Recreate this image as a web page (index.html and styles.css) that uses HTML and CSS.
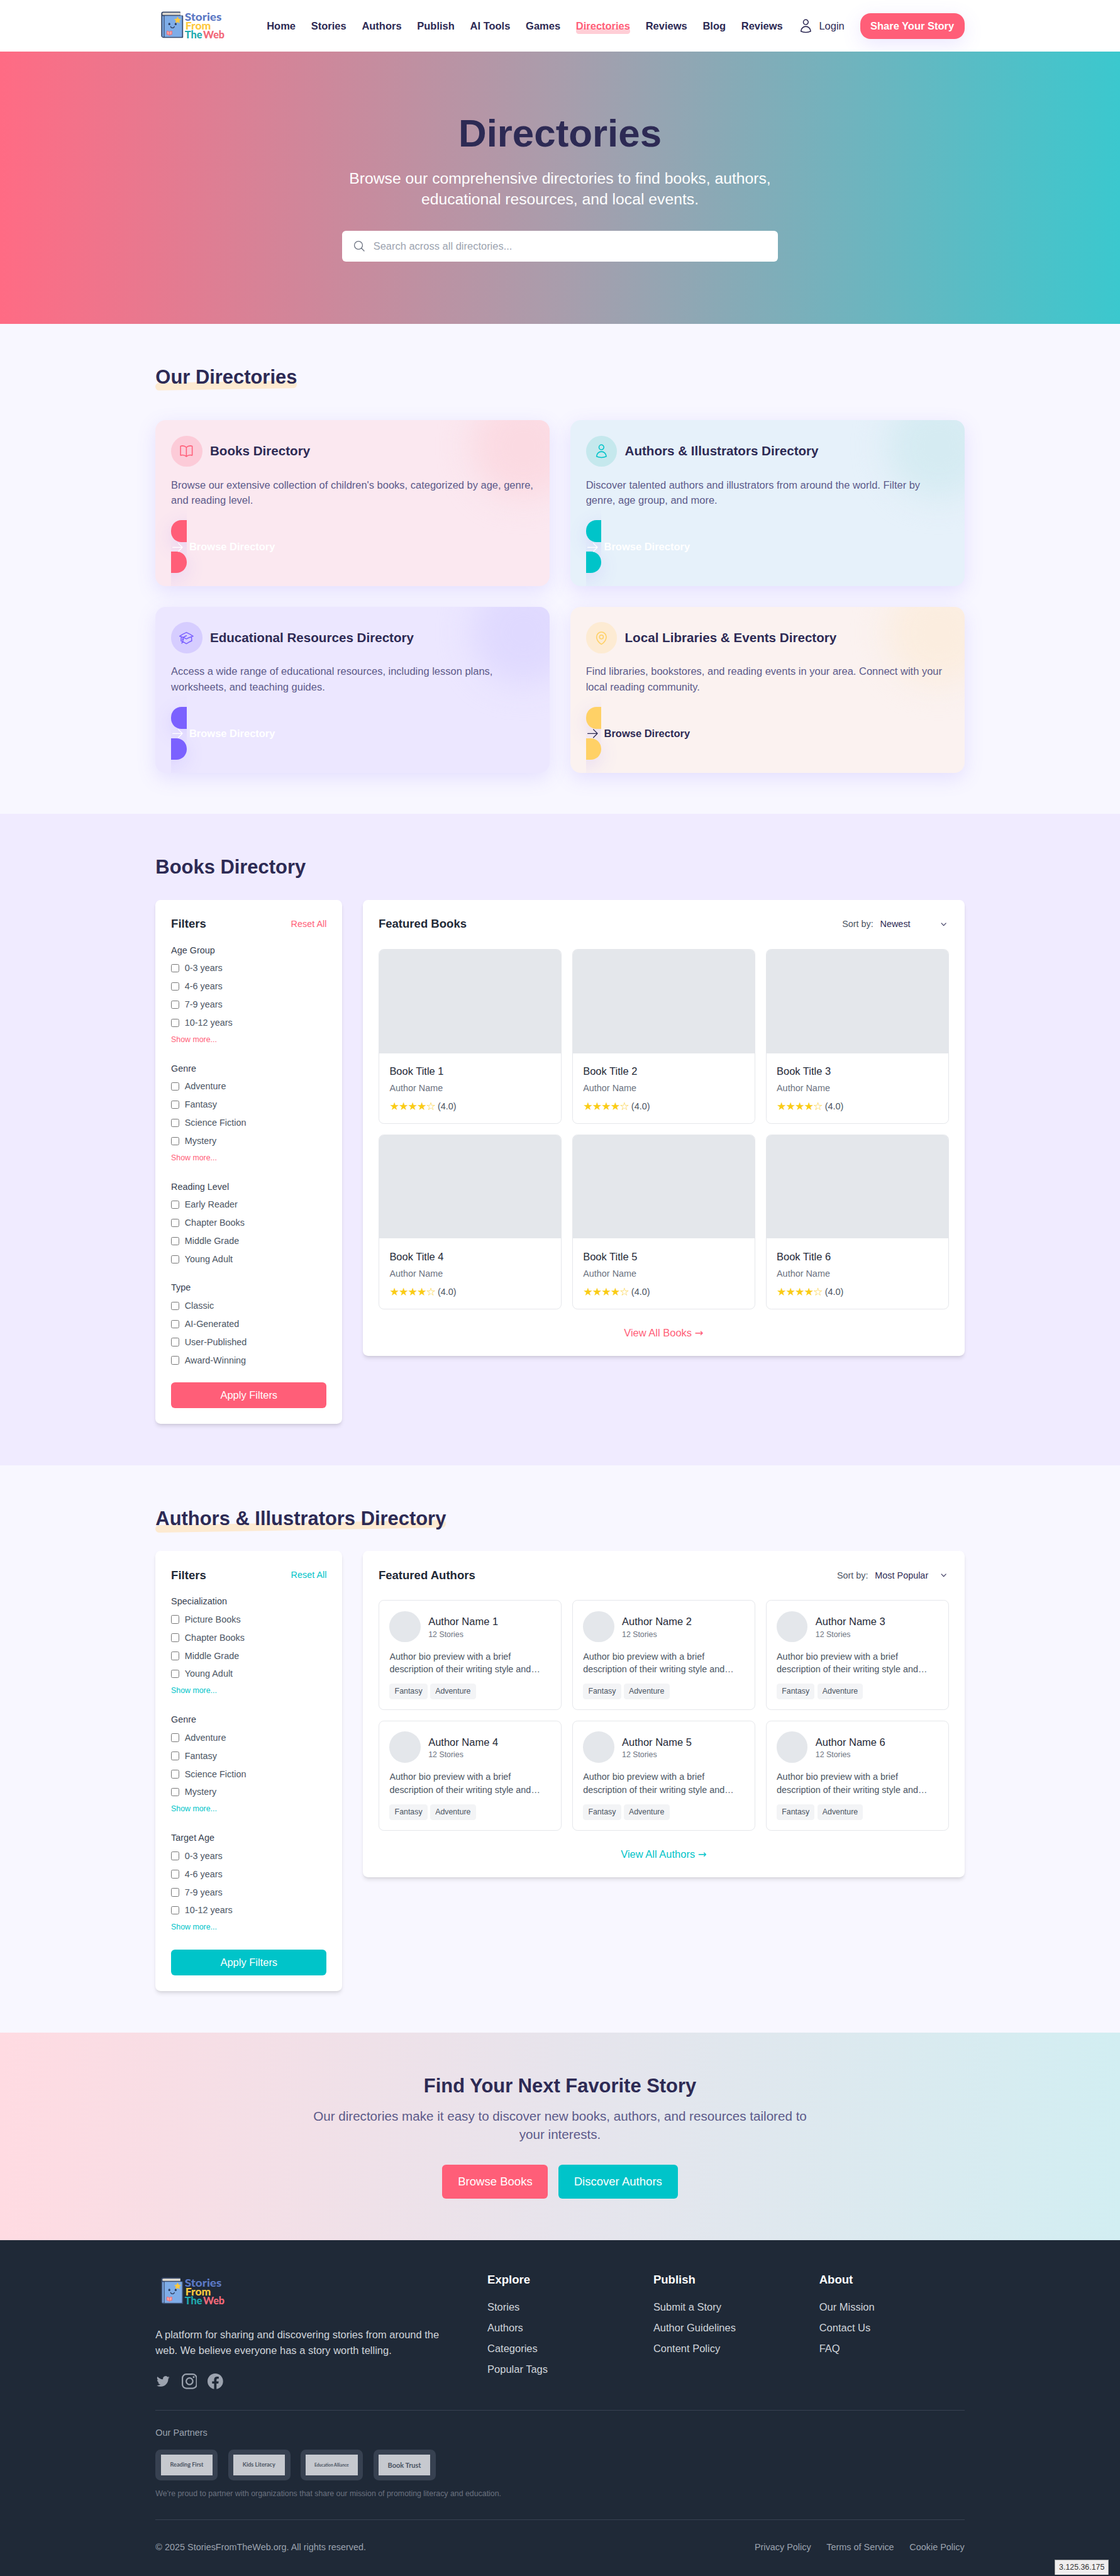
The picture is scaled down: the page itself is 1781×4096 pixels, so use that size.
FILE: index.html
```html
<!DOCTYPE html>
<html lang="en">
<head>
<meta charset="utf-8">
<title>Directories - Stories From The Web</title>
<link rel="stylesheet" href="styles.css">
</head>
<body>
<svg class="sprite" aria-hidden="true">
  <symbol id="logo" viewBox="0 0 112 64">
    <path d="M12.2 11h25.6v6H42v32.7H12.5a2.5 2.5 0 0 1-2.6-2.6V13.6A2.5 2.5 0 0 1 12.2 11z" fill="#3b4c6e" stroke="#3b4c6e" stroke-width="1.8" stroke-linejoin="round"/>
    <path d="M12.6 11.8h26v3.6h-26a1.8 1.8 0 0 1 0-3.6z" fill="#e3ddd1"/>
    <rect x="10.8" y="17" width="2.2" height="32" fill="#7fade8"/>
    <rect x="14.2" y="16.8" width="27" height="32.4" rx=".6" fill="#7fade8"/>
    <path d="m34.4 18.8 1.3 2.8 3.1.4-2.2 2.2.5 3.1-2.7-1.5-2.8 1.5.6-3.1-2.2-2.2 3-.4z" fill="#fdc93f" stroke="#fdc93f" stroke-width="1" stroke-linejoin="round"/>
    <ellipse cx="21.6" cy="29.3" rx="1.5" ry="1.8" fill="#2f4163"/>
    <ellipse cx="31.4" cy="29.3" rx="1.5" ry="1.8" fill="#2f4163"/>
    <path d="M23.6 33c.6 3 5.2 3 5.8 0" fill="none" stroke="#2f4163" stroke-width="1.2" stroke-linecap="round"/>
    <path d="M17.8 40.3q2.3-.5 3.9 1.3 1.6-1.8 3.9-1.3v5q-2.3-.2-3.9 1.5-1.6-1.7-3.9-1.5z" fill="#f7a6a2" stroke="#ee6674" stroke-width=".9" stroke-linejoin="round"/>
    <path d="M21.7 41.6v5" stroke="#ee6674" stroke-width=".9"/>
    <g class="logo-text">
      <text x="45.3" y="24" font-size="16.5" textLength="57" lengthAdjust="spacingAndGlyphs" fill="#5b78c4">Stories</text>
      <text x="46.3" y="37.7" font-size="15.6" textLength="39.5" lengthAdjust="spacingAndGlyphs" fill="#fdc93f">From</text>
      <text x="45.3" y="51.5" font-size="15.6" textLength="27" lengthAdjust="spacingAndGlyphs" fill="#1fabb0">The</text>
      <text x="73.8" y="51.5" font-size="15.6" textLength="33" lengthAdjust="spacingAndGlyphs" fill="#f26878">Web</text>
    </g>
  </symbol>
  <symbol id="user" viewBox="0 0 24 24"><path d="M15.75 6a3.75 3.75 0 11-7.5 0 3.75 3.75 0 017.5 0zM4.501 20.118a7.5 7.5 0 0114.998 0A17.933 17.933 0 0112 21.75c-2.676 0-5.216-.584-7.499-1.632z"/></symbol>
  <symbol id="search" viewBox="0 0 24 24"><path d="M21 21l-5.197-5.197m0 0A7.5 7.5 0 105.196 5.196a7.5 7.5 0 0010.607 10.607z"/></symbol>
  <symbol id="book" viewBox="0 0 24 24"><path d="M12 6.042A8.967 8.967 0 006 3.75c-1.052 0-2.062.18-3 .512v14.25A8.987 8.987 0 016 18c2.305 0 4.408.867 6 2.292m0-14.25a8.966 8.966 0 016-2.292c1.052 0 2.062.18 3 .512v14.25A8.987 8.987 0 0018 18a8.967 8.967 0 00-6 2.292m0-14.25v14.25"/></symbol>
  <symbol id="cap" viewBox="0 0 24 24"><path d="M4.26 10.147a60.436 60.436 0 00-.491 6.347A48.627 48.627 0 0112 20.904a48.627 48.627 0 018.232-4.41 60.46 60.46 0 00-.491-6.347m-15.482 0a50.57 50.57 0 00-2.658-.813A59.905 59.905 0 0112 3.493a59.902 59.902 0 0110.399 5.84c-.896.248-1.783.52-2.658.814m-15.482 0A50.697 50.697 0 0112 13.489a50.702 50.702 0 017.74-3.342M6.75 15a.75.75 0 100-1.5.75.75 0 000 1.5zm0 0v-3.675A55.378 55.378 0 0112 8.443m-7.007 11.55A5.981 5.981 0 006.75 15.75v-1.5"/></symbol>
  <symbol id="pin" viewBox="0 0 24 24"><path d="M15 10.5a3 3 0 11-6 0 3 3 0 016 0z"/><path d="M19.5 10.5c0 7.142-7.5 11.25-7.5 11.25S4.5 17.642 4.5 10.5a7.5 7.5 0 1115 0z"/></symbol>
  <symbol id="arrow" viewBox="0 0 24 24"><path d="M13.5 4.5L21 12m0 0l-7.5 7.5M21 12H3"/></symbol>
  <symbol id="chevron" viewBox="0 0 10 6"><path d="M.8.7 5 5 9.2.7"/></symbol>
</svg>

<header class="header">
  <div class="container header-row">
    <svg class="logo"><use href="#logo"/></svg>
    <nav class="nav">
      <a>Home</a><a>Stories</a><a>Authors</a><a>Publish</a><a>AI Tools</a><a>Games</a><a class="active">Directories</a><a>Reviews</a><a>Blog</a><a>Reviews</a>
      <a class="login"><svg class="icon"><use href="#user"/></svg>Login</a>
      <a class="share">Share Your Story</a>
    </nav>
  </div>
</header>

<section class="hero">
  <h1>Directories</h1>
  <p>Browse our comprehensive directories to find books, authors, educational resources, and local events.</p>
  <div class="search"><svg class="icon"><use href="#search"/></svg><span>Search across all directories...</span></div>
</section>

<section class="section">
  <div class="container">
    <h2 class="title underlined overview-title">Our Directories</h2>
    <div class="directories">
      <article class="dir pink">
        <div class="dir-head"><span class="dir-icon"><svg class="icon"><use href="#book"/></svg></span><h3>Books Directory</h3></div>
        <p>Browse our extensive collection of children's books, categorized by age, genre, and reading level.</p>
        <a class="browse"><span class="browse-label"><svg class="icon"><use href="#arrow"/></svg>Browse Directory</span></a>
      </article>
      <article class="dir teal">
        <div class="dir-head"><span class="dir-icon"><svg class="icon"><use href="#user"/></svg></span><h3>Authors &amp; Illustrators Directory</h3></div>
        <p>Discover talented authors and illustrators from around the world. Filter by genre, age group, and more.</p>
        <a class="browse"><span class="browse-label"><svg class="icon"><use href="#arrow"/></svg>Browse Directory</span></a>
      </article>
      <article class="dir purple">
        <div class="dir-head"><span class="dir-icon"><svg class="icon"><use href="#cap"/></svg></span><h3>Educational Resources Directory</h3></div>
        <p>Access a wide range of educational resources, including lesson plans, worksheets, and teaching guides.</p>
        <a class="browse"><span class="browse-label"><svg class="icon"><use href="#arrow"/></svg>Browse Directory</span></a>
      </article>
      <article class="dir yellow">
        <div class="dir-head"><span class="dir-icon"><svg class="icon"><use href="#pin"/></svg></span><h3>Local Libraries &amp; Events Directory</h3></div>
        <p>Find libraries, bookstores, and reading events in your area. Connect with your local reading community.</p>
        <a class="browse"><span class="browse-label"><svg class="icon"><use href="#arrow"/></svg>Browse Directory</span></a>
      </article>
    </div>
  </div>
</section>

<section class="section lavender theme-pink">
  <div class="container">
    <h2 class="title">Books Directory</h2>
    <div class="columns">
      <aside class="panel">
        <div class="panel-head"><h3>Filters</h3><a class="reset">Reset All</a></div>
        <div class="group"><h4>Age Group</h4>
          <ul><li><i></i>0-3 years</li><li><i></i>4-6 years</li><li><i></i>7-9 years</li><li><i></i>10-12 years</li></ul>
          <button class="more">Show more...</button></div>
        <div class="group"><h4>Genre</h4>
          <ul><li><i></i>Adventure</li><li><i></i>Fantasy</li><li><i></i>Science Fiction</li><li><i></i>Mystery</li></ul>
          <button class="more">Show more...</button></div>
        <div class="group"><h4>Reading Level</h4>
          <ul><li><i></i>Early Reader</li><li><i></i>Chapter Books</li><li><i></i>Middle Grade</li><li><i></i>Young Adult</li></ul></div>
        <div class="group"><h4>Type</h4>
          <ul><li><i></i>Classic</li><li><i></i>AI-Generated</li><li><i></i>User-Published</li><li><i></i>Award-Winning</li></ul></div>
        <button class="apply">Apply Filters</button>
      </aside>
      <div class="panel">
        <div class="panel-head main-head"><h3>Featured Books</h3><div class="sort"><span>Sort by:</span><span class="select select-books">Newest<svg><use href="#chevron"/></svg></span></div></div>
        <div class="cards">
          <article class="card book"><div class="cover"></div><div class="card-body"><h4>Book Title 1</h4><p>Author Name</p><div class="rating"><span class="stars">★★★★☆</span><span>(4.0)</span></div></div></article>
          <article class="card book"><div class="cover"></div><div class="card-body"><h4>Book Title 2</h4><p>Author Name</p><div class="rating"><span class="stars">★★★★☆</span><span>(4.0)</span></div></div></article>
          <article class="card book"><div class="cover"></div><div class="card-body"><h4>Book Title 3</h4><p>Author Name</p><div class="rating"><span class="stars">★★★★☆</span><span>(4.0)</span></div></div></article>
          <article class="card book"><div class="cover"></div><div class="card-body"><h4>Book Title 4</h4><p>Author Name</p><div class="rating"><span class="stars">★★★★☆</span><span>(4.0)</span></div></div></article>
          <article class="card book"><div class="cover"></div><div class="card-body"><h4>Book Title 5</h4><p>Author Name</p><div class="rating"><span class="stars">★★★★☆</span><span>(4.0)</span></div></div></article>
          <article class="card book"><div class="cover"></div><div class="card-body"><h4>Book Title 6</h4><p>Author Name</p><div class="rating"><span class="stars">★★★★☆</span><span>(4.0)</span></div></div></article>
        </div>
        <div class="view-all">View All Books <span class="go">→</span></div>
      </div>
    </div>
  </div>
</section>

<section class="section theme-teal">
  <div class="container">
    <h2 class="title underlined">Authors &amp; Illustrators Directory</h2>
    <div class="columns">
      <aside class="panel">
        <div class="panel-head"><h3>Filters</h3><a class="reset">Reset All</a></div>
        <div class="group"><h4>Specialization</h4>
          <ul><li><i></i>Picture Books</li><li><i></i>Chapter Books</li><li><i></i>Middle Grade</li><li><i></i>Young Adult</li></ul>
          <button class="more">Show more...</button></div>
        <div class="group"><h4>Genre</h4>
          <ul><li><i></i>Adventure</li><li><i></i>Fantasy</li><li><i></i>Science Fiction</li><li><i></i>Mystery</li></ul>
          <button class="more">Show more...</button></div>
        <div class="group"><h4>Target Age</h4>
          <ul><li><i></i>0-3 years</li><li><i></i>4-6 years</li><li><i></i>7-9 years</li><li><i></i>10-12 years</li></ul>
          <button class="more">Show more...</button></div>
        <button class="apply">Apply Filters</button>
      </aside>
      <div class="panel">
        <div class="panel-head main-head"><h3>Featured Authors</h3><div class="sort"><span>Sort by:</span><span class="select select-authors">Most Popular<svg><use href="#chevron"/></svg></span></div></div>
        <div class="cards">
          <article class="card author"><div class="who"><span class="avatar"></span><div><h4>Author Name 1</h4><small>12 Stories</small></div></div><p>Author bio preview with a brief description of their writing style and…</p><div class="tags"><span>Fantasy</span><span>Adventure</span></div></article>
          <article class="card author"><div class="who"><span class="avatar"></span><div><h4>Author Name 2</h4><small>12 Stories</small></div></div><p>Author bio preview with a brief description of their writing style and…</p><div class="tags"><span>Fantasy</span><span>Adventure</span></div></article>
          <article class="card author"><div class="who"><span class="avatar"></span><div><h4>Author Name 3</h4><small>12 Stories</small></div></div><p>Author bio preview with a brief description of their writing style and…</p><div class="tags"><span>Fantasy</span><span>Adventure</span></div></article>
          <article class="card author"><div class="who"><span class="avatar"></span><div><h4>Author Name 4</h4><small>12 Stories</small></div></div><p>Author bio preview with a brief description of their writing style and…</p><div class="tags"><span>Fantasy</span><span>Adventure</span></div></article>
          <article class="card author"><div class="who"><span class="avatar"></span><div><h4>Author Name 5</h4><small>12 Stories</small></div></div><p>Author bio preview with a brief description of their writing style and…</p><div class="tags"><span>Fantasy</span><span>Adventure</span></div></article>
          <article class="card author"><div class="who"><span class="avatar"></span><div><h4>Author Name 6</h4><small>12 Stories</small></div></div><p>Author bio preview with a brief description of their writing style and…</p><div class="tags"><span>Fantasy</span><span>Adventure</span></div></article>
        </div>
        <div class="view-all">View All Authors <span class="go">→</span></div>
      </div>
    </div>
  </div>
</section>

<section class="cta">
  <h2>Find Your Next Favorite Story</h2>
  <p>Our directories make it easy to discover new books, authors, and resources tailored to your interests.</p>
  <div class="cta-buttons"><a class="cta-pink">Browse Books</a><a class="cta-teal">Discover Authors</a></div>
</section>

<footer class="footer">
  <div class="container">
    <div class="footer-grid">
      <div class="about">
        <svg class="logo"><use href="#logo"/></svg>
        <p>A platform for sharing and discovering stories from around the web. We believe everyone has a story worth telling.</p>
        <div class="social">
          <svg viewBox="0 0 24 24"><path d="M8.29 20.251c7.547 0 11.675-6.253 11.675-11.675 0-.178 0-.355-.012-.53A8.348 8.348 0 0022 5.92a8.19 8.19 0 01-2.357.646 4.118 4.118 0 001.804-2.27 8.224 8.224 0 01-2.605.996 4.107 4.107 0 00-6.993 3.743 11.65 11.65 0 01-8.457-4.287 4.106 4.106 0 001.27 5.477A4.072 4.072 0 012.8 9.713v.052a4.105 4.105 0 003.292 4.022 4.095 4.095 0 01-1.853.07 4.108 4.108 0 003.834 2.85A8.233 8.233 0 012 18.407a11.616 11.616 0 006.29 1.84"/></svg>
          <svg viewBox="0 0 24 24"><rect x="1.08" y="1.08" width="21.84" height="21.84" rx="6" fill="none" stroke="currentColor" stroke-width="2.16"/><circle cx="12" cy="12" r="5.08" fill="none" stroke="currentColor" stroke-width="2.16"/><circle cx="18.4" cy="5.6" r="1.44"/></svg>
          <svg viewBox="0 0 24 24"><path d="M24 12.073c0-6.627-5.373-12-12-12s-12 5.373-12 12c0 5.99 4.388 10.954 10.125 11.854v-8.385H7.078v-3.47h3.047V9.43c0-3.007 1.792-4.669 4.533-4.669 1.312 0 2.686.235 2.686.235v2.953H15.83c-1.491 0-1.956.925-1.956 1.874v2.25h3.328l-.532 3.47h-2.796v8.385C19.612 23.027 24 18.062 24 12.073z"/></svg>
        </div>
      </div>
      <div><h3>Explore</h3><ul><li>Stories</li><li>Authors</li><li>Categories</li><li>Popular Tags</li></ul></div>
      <div><h3>Publish</h3><ul><li>Submit a Story</li><li>Author Guidelines</li><li>Content Policy</li></ul></div>
      <div><h3>About</h3><ul><li>Our Mission</li><li>Contact Us</li><li>FAQ</li></ul></div>
    </div>
    <div class="partners">
      <h4>Our Partners</h4>
      <div class="partner-row">
        <span><svg viewBox="0 0 80 32"><text x="14" y="18.8" font-size="9" textLength="51.5" lengthAdjust="spacingAndGlyphs">Reading First</text></svg></span>
        <span><svg viewBox="0 0 80 32"><text x="14.3" y="18.8" font-size="9" textLength="50.5" lengthAdjust="spacingAndGlyphs">Kids Literacy</text></svg></span>
        <span><svg viewBox="0 0 80 32"><text x="13.6" y="18.3" font-size="6.5" textLength="53" lengthAdjust="spacingAndGlyphs">Education Alliance</text></svg></span>
        <span><svg viewBox="0 0 80 32"><text x="14" y="20" font-size="10.8" textLength="51.5" lengthAdjust="spacingAndGlyphs">Book Trust</text></svg></span>
      </div>
      <p>We're proud to partner with organizations that share our mission of promoting literacy and education.</p>
    </div>
    <div class="legal"><span>© 2025 StoriesFromTheWeb.org. All rights reserved.</span><nav><a>Privacy Policy</a><a>Terms of Service</a><a>Cookie Policy</a></nav></div>
  </div>
  <div class="status">3.125.36.175</div>
</footer>
</body>
</html>
```
FILE: styles.css
```css
/* 1rem = 16 design px, scaled from a 1728px canvas to 1781px */
html { font-size: 16.4907px; background: #1f2937; }
*, *::before, *::after { box-sizing: border-box; }
body {
  margin: 0;
  background: #f8f7ff;
  color: #2d2a54;
  font: 1rem/1.5 "Liberation Sans", Arial, sans-serif;
}
h1, h2, h3, h4, p, ul { margin: 0; padding: 0; }
ul { list-style: none; }
button { border: 0; background: none; padding: 0; font: inherit; }
.sprite { display: none; }
.container { width: 78rem; margin: 0 auto; }
.icon { width: 1.5rem; height: 1.5rem; display: block; flex: none; fill: none; stroke: currentColor; stroke-width: 1.5; stroke-linecap: round; stroke-linejoin: round; }

/* header */
.header { height: 5rem; background: #fff; }
.header-row { height: 100%; display: flex; align-items: center; justify-content: space-between; }
.logo { display: block; width: 7rem; height: 4rem; }
.logo-text { font-family: Lato, sans-serif; font-weight: 900; }
.nav { display: flex; align-items: center; gap: 1.5rem; font-weight: 700; white-space: nowrap; }
.active { position: relative; color: #ff5e78; }
.active::after { content: ""; position: absolute; left: 0; right: 0; bottom: 0; height: .5rem; border-radius: .25rem; background: rgba(255, 94, 120, .3); }
.login { display: flex; align-items: center; gap: .5rem; font-weight: 400; }
.share { padding: .5rem 1rem; border-radius: 1rem; background: #ff5e78; color: #fff; box-shadow: 0 .5rem 1.875rem rgba(123, 97, 255, .15); }

/* hero */
.hero { position: relative; height: 26.25rem; padding: 6rem 0; background: linear-gradient(90deg, #ff6b84, #a99dac 50%, #3bc8ce); text-align: center; }
.hero h1 { font-size: 3.75rem; line-height: 1; }
.hero p { width: 48rem; padding: 0 2.9rem; margin: 1.5rem auto 2rem; font-size: 1.5rem; line-height: 2rem; color: #fff; }
.search { width: 42rem; height: 3rem; margin: 0 auto; padding: 0 1rem; display: flex; align-items: center; gap: .75rem; background: #fff; border-radius: .375rem; color: #9ca3af; }
.search .icon { width: 1.25rem; height: 1.25rem; color: #6b7280; }

/* section scaffolding */
.section { padding: 4rem 0; }
.lavender { background: #f0ebff; }
.theme-pink { --accent: #ff5e78; }
.theme-teal { --accent: #00c4c9; }
.title { width: fit-content; font-size: 1.875rem; line-height: 2.25rem; margin-bottom: 2rem; }
.overview-title { margin-bottom: 3rem; }
.underlined { position: relative; z-index: 0; }
.underlined::after { content: ""; position: absolute; z-index: -1; left: 0; bottom: 0; width: 100%; height: .7rem; border-radius: .35rem; background: #fdead1; transform: rotate(-1deg); }

/* directory cards */
.directories { display: grid; grid-template-columns: 1fr 1fr; gap: 2rem; }
.dir { position: relative; overflow: hidden; height: 16rem; padding: 1.5rem; border-radius: 1rem; background: var(--bg); box-shadow: 0 .5rem 1.875rem rgba(123, 97, 255, .15); }
.dir::before { content: ""; position: absolute; top: -2.5rem; right: -2.5rem; width: 10rem; height: 10rem; border-radius: 50%; background: var(--blob); filter: blur(1.5rem); }
.dir > * { position: relative; }
.pink { --bg: #fbe8f0; --blob: #fbdae2; --circle: #fccbd8; --main: #ff5e78; --on: #fff; }
.teal { --bg: #e6f1fa; --blob: #d5ebf2; --circle: #c5e8ed; --main: #00c4c9; --on: #fff; }
.purple { --bg: #ece7ff; --blob: #dfd9ff; --circle: #d6cdff; --main: #7b61ff; --on: #fff; }
.yellow { --bg: #fbf2f0; --blob: #fbeddf; --circle: #fdebd3; --main: #ffd166; --on: #2d2a54; }
.dir-head { display: flex; align-items: center; gap: .75rem; margin-bottom: 1rem; }
.dir-icon { width: 3rem; height: 3rem; border-radius: 50%; background: var(--circle); color: var(--main); display: flex; align-items: center; justify-content: center; }
.dir-head h3 { font-size: 1.25rem; line-height: 1.75rem; }
.dir p { color: #5c5a8a; margin-bottom: 1.5rem; }
/* inline link around a block label, so its padding box splits above and below the label */
.dir .browse { position: static; padding: .5rem 1.5rem; border-radius: 1rem; background: var(--main); color: var(--on); font-weight: 700; box-shadow: 0 .5rem 1.875rem rgba(123, 97, 255, .15); }
.browse-label { position: relative; display: flex; align-items: center; gap: .5rem; height: 1.5rem; }
.browse-label .icon { width: 1.25rem; height: 1.25rem; }

/* filters and listings */
.columns { display: grid; grid-template-columns: 18rem 58rem; gap: 2rem; align-items: start; }
.panel { background: #fff; border-radius: .5rem; padding: 1.5rem; box-shadow: 0 .25rem .375rem -.0625rem rgba(0, 0, 0, .1), 0 .125rem .25rem -.125rem rgba(0, 0, 0, .1); color: #1f2937; }
.panel-head { display: flex; align-items: center; justify-content: space-between; height: 1.75rem; margin-bottom: 1rem; }
.main-head { margin-bottom: 1.5rem; }
.panel-head h3 { font-size: 1.125rem; line-height: 1.75rem; }
.reset { font-size: .875rem; color: var(--accent); }
.group { display: flow-root; padding-bottom: 1.5rem; }
.group h4 { font-weight: 400; font-size: .875rem; line-height: 1.25rem; color: #374151; margin-bottom: .5rem; }
.group ul { display: grid; gap: .5rem; }
.group li { display: flex; align-items: center; gap: .5rem; font-size: .875rem; line-height: 1.25rem; color: #4b5563; }
.group i { width: .8125rem; height: .8125rem; border: 1px solid #767676; border-radius: .156rem; background: #fff; }
.more { display: block; margin: .5rem 0 .156rem; font-size: .75rem; line-height: 1rem; color: var(--accent); }
.apply { display: block; width: 100%; height: 2.5rem; border-radius: .375rem; background: var(--accent); color: #fff; }
.sort { display: flex; align-items: center; gap: .5rem; font-size: .875rem; line-height: 1.25rem; color: #4b5563; }
.select { display: flex; align-items: center; justify-content: space-between; padding: 0 .19rem 0 .15rem; color: #2d2a54; }
.select-books { width: 6.78rem; }
.select-authors { width: 7.28rem; }
.select svg { width: .5625rem; height: .34rem; fill: none; stroke: currentColor; stroke-width: 1.1; }
.cards { display: grid; grid-template-columns: repeat(3, 1fr); gap: 1rem; }
.card { border: 1px solid #e5e7eb; border-radius: .5rem; overflow: hidden; height: 16.875rem; }
.card h4 { font-weight: 400; font-size: 1rem; line-height: 1.5rem; }
.cover { height: 10rem; background: #e4e7eb; }
.card-body { padding: 1rem; }
.book p { margin: .25rem 0 .5rem; font-size: .875rem; line-height: 1.25rem; color: #6b7280; }
.rating { display: flex; align-items: center; gap: .25rem; height: 1.25rem; font-size: .875rem; line-height: 1.25rem; color: #4b5563; }
.stars { width: 4.4rem; white-space: nowrap; color: #facc15; font-family: "DejaVu Sans", sans-serif; font-size: 1.06rem; letter-spacing: -.07rem; }
.author { height: 10.625rem; padding: 1rem; }
.who { display: flex; align-items: center; gap: .75rem; height: 3rem; margin-bottom: .75rem; }
.avatar { width: 3rem; height: 3rem; border-radius: 50%; background: #e4e7eb; }
.who small { display: block; font-size: .75rem; line-height: 1rem; color: #6b7280; }
.author p { font-size: .875rem; line-height: 1.25rem; color: #4b5563; margin-bottom: .75rem; }
.tags { display: flex; gap: .25rem; }
.tags span { padding: .25rem .5rem; border-radius: .25rem; background: #f3f4f6; color: #4b5563; font-size: .75rem; line-height: 1rem; }
.view-all { margin-top: 1.5rem; height: 1.5rem; text-align: center; color: var(--accent); line-height: 1.5rem; }
.go { font-family: "DejaVu Sans", sans-serif; line-height: 1; }

/* call to action */
.cta { padding: 4rem 0; text-align: center; background: linear-gradient(90deg, #ffdbe2, #e7e4ec 50%, #d2eef2); }
.cta h2 { font-size: 1.875rem; line-height: 2.25rem; }
.cta p { width: 48rem; margin: 1rem auto 2rem; font-size: 1.25rem; line-height: 1.75rem; color: #5c5a8a; }
.cta-buttons { display: flex; justify-content: center; gap: 1rem; font-size: 1.125rem; line-height: 1.75rem; color: #fff; }
.cta-buttons a { padding: .75rem 1.5rem; border-radius: .375rem; }
.cta-pink { background: #ff5e78; }
.cta-teal { background: #00c4c9; }

/* footer */
.footer { position: relative; background: #1f2937; padding: 3rem 0 2rem; color: #d1d5db; }
.footer-grid { display: grid; grid-template-columns: 30rem 14rem 14rem 14rem; gap: 2rem; padding-bottom: 2rem; }
.about p { width: 28rem; margin: 1.406rem 0 1.5rem; }
.social { display: flex; gap: 1rem; color: #9ca3af; }
.social svg { width: 1.5rem; height: 1.5rem; fill: currentColor; }
.footer h3 { color: #fff; font-size: 1.125rem; line-height: 1.75rem; margin-bottom: 1rem; }
.footer li { margin-bottom: .5rem; }
.partners { border-top: 1px solid #374151; padding: 1.5rem 0 2rem; }
.partners h4 { font-weight: 400; font-size: .875rem; line-height: 1.25rem; color: #9ca3af; margin-bottom: 1rem; }
.partner-row { display: flex; gap: 1rem; margin-bottom: .75rem; }
.partner-row span { width: 6rem; height: 3rem; padding: .5rem; border-radius: .5rem; background: #374151; }
.partner-row svg { display: block; width: 5rem; height: 2rem; background: #c6c9cf; fill: #4b5563; font-family: Lato, sans-serif; font-weight: 700; }
.partners p { font-size: .75rem; line-height: 1rem; color: #6b7280; }
.legal { border-top: 1px solid #374151; padding-top: 2rem; display: flex; justify-content: space-between; font-size: .875rem; line-height: 1.25rem; color: #9ca3af; }
.legal nav { display: flex; gap: 1.5rem; }
.status { position: absolute; right: 1.08rem; bottom: -1px; height: 1.5rem; padding: .14rem .36rem; border: 1px solid #a3a3a3; border-bottom: 0; background: #f0eeee; color: #333; font-size: .75rem; line-height: 1.125rem; }
```
